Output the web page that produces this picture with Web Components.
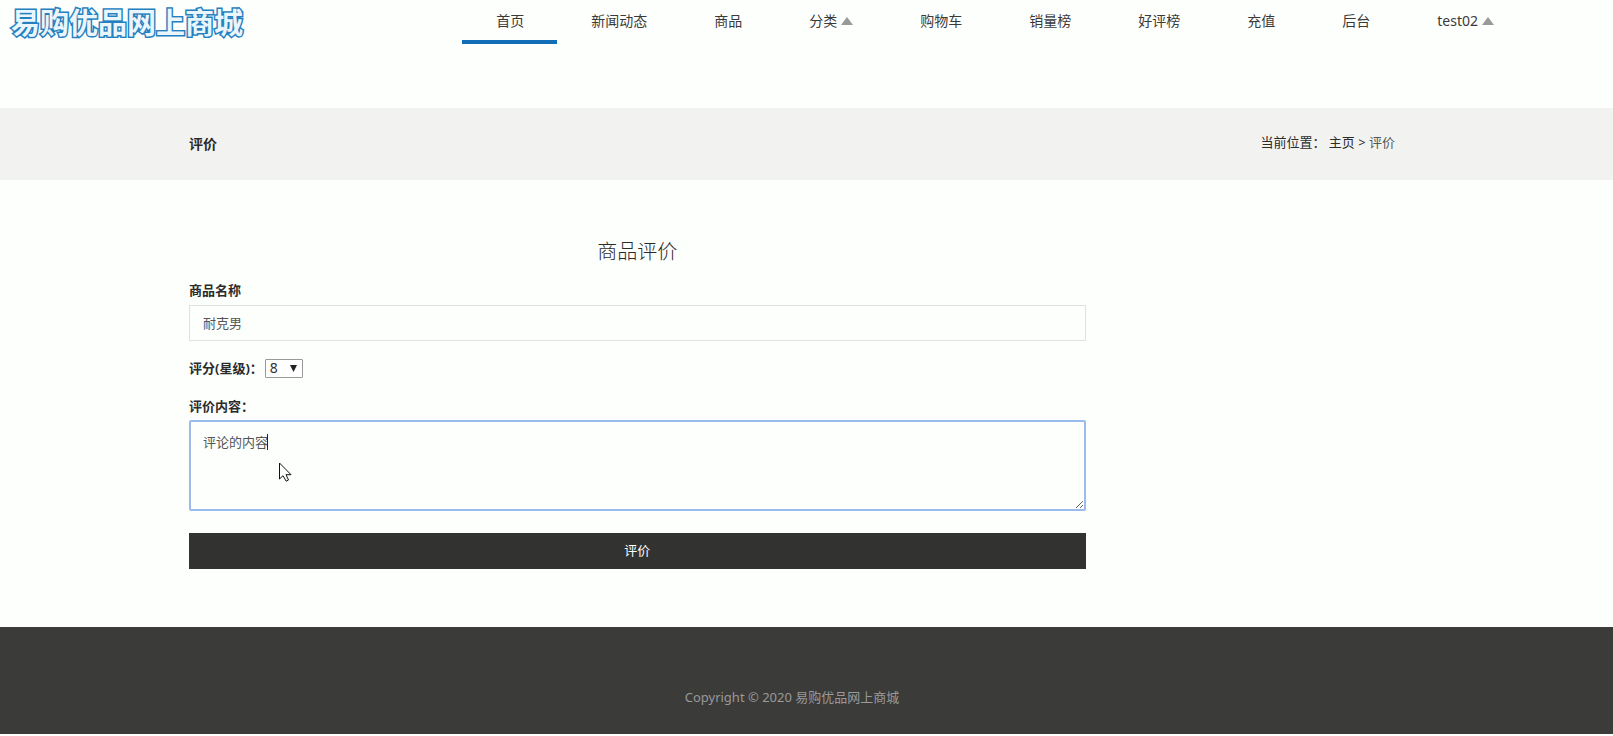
<!DOCTYPE html>
<html lang="zh-CN">
<head>
<meta charset="utf-8">
<meta name="viewport" content="width=device-width, initial-scale=1">
<title>商品评价 - 易购优品网上商城</title>
<style>
  :root { --ink: #2b2b2b; --dark: #323230; --brand: #136fb5; }
  body {
    margin: 0; background: #fdfffd; color: var(--ink);
    font: 13px/20px "Noto Sans", "Noto Sans CJK SC", sans-serif;
  }
</style>
</head>
<body>
<shop-page></shop-page>
<script>
const define = (name, html, setup) => customElements.define(name, class extends HTMLElement {
  constructor() {
    super();
    const t = document.createElement('template');
    t.innerHTML = html;
    this.attachShadow({ mode: 'open' }).append(t.content.cloneNode(true));
  }
  connectedCallback() { if (setup) setup(this, this.shadowRoot); }
});

define('shop-logo', `
<style>
  :host { display: block; }
  a { font-size: 29px; line-height: 46px; font-weight: 700; white-space: nowrap;
      color: #eaf6fd; text-decoration: none; -webkit-text-stroke: 3px #2580bf; paint-order: stroke fill; }
</style>
<a href="#"><slot></slot></a>`);

define('nav-item', `
<style>
  :host { display: block; }
  a { display: flex; align-items: center; box-sizing: border-box; height: 44px; padding: 2px 33px 0 34px;
      border-bottom: 4px solid transparent; font-size: 14px; color: #3a3a3a; text-decoration: none; white-space: nowrap; }
  :host([active]) a { border-color: var(--brand); }
  svg { display: none; margin-left: 4px; }
  :host([menu]) svg { display: block; }
</style>
<a href="#"><slot></slot><svg width="12" height="8" viewBox="0 0 12 8"><path d="M6 0 12 8H0Z" fill="#999"/></svg></a>`);

define('shop-header', `
<style>
  :host { display: block; }
  header { display: flex; justify-content: space-between; height: 108px; padding: 0 86px 0 11px; }
  nav { display: flex; }
</style>
<header><slot name="logo"></slot><nav><slot></slot></nav></header>`);

define('page-container', `
<style>
  :host { display: block; padding: 0 218px 0 189px; }
</style>
<slot></slot>`);

define('title-band', `
<style>
  :host { display: block; background: #f2f3f1; }
  .row { display: flex; justify-content: space-between; height: 72px; }
  h1 { margin: 0; font-size: 14px; line-height: 72px; font-weight: 700; }
  nav { line-height: 68px; white-space: pre; }
  a { color: inherit; text-decoration: none; }
  a:last-child { color: #555; }
</style>
<page-container><div class="row"><h1>评价</h1>
<nav aria-label="当前位置">当前位置： <a href="#">主页</a> &gt; <a href="#">评价</a></nav></div></page-container>`);

define('review-form', `
<style>
  :host { display: block; }
  form { box-sizing: border-box; width: calc(75% - 8px); padding: 56px 0 58px; }
  h2 { margin: 0 0 12px; font-size: 20px; line-height: 32px; font-weight: 300; text-align: center; }
  label { display: block; font-weight: 700; line-height: 20px; }
  input, textarea, button { display: block; box-sizing: border-box; width: 100%; font: inherit; border-radius: 0; }
  input, textarea { border: 1px solid #e0e2e0; background: transparent; color: #555; }
  input { height: 36px; margin: 5px 0 17px; padding: 0 13px 2px; }
  .rating { display: flex; align-items: center; height: 20px; margin-bottom: 18px; }
  .pick { position: relative; margin-left: 2px; }
  select { display: block; appearance: none; width: 38px; height: 19px; padding: 0 4px; border: 1px solid #999; border-radius: 1px;
    background: #fff; color: #333; font: 14px/16px "Noto Sans", sans-serif; }
  .pick svg { position: absolute; right: 6px; top: 6px; pointer-events: none; }
  .field { position: relative; margin: 4px 0 22px; }
  textarea { height: 91px; padding: 10px 12px; border: 2px solid #9bbbec; border-radius: 2px; resize: vertical; }
  .caret { position: absolute; left: 78px; top: 14px; width: 1px; height: 16px; background: #222; }
  .pointer { position: absolute; left: 90px; top: 42px; }
  button { height: 36px; padding: 0 0 2px; border: 0; background: var(--dark); color: #fff; }
</style>
<form>
  <h2>商品评价</h2>
  <label for="name">商品名称</label>
  <input id="name" value="耐克男">
  <div class="rating">
    <label for="stars">评分(星级)：</label>
    <div class="pick"><select id="stars"><option>8</option><option>9</option><option>10</option></select>
      <svg width="7" height="7" viewBox="0 0 7 7"><path d="M0 0H7L3.5 7Z" fill="#222"/></svg></div>
  </div>
  <label for="content">评价内容：</label>
  <div class="field">
    <textarea id="content">评论的内容</textarea>
    <span class="caret"></span>
    <svg class="pointer" width="13" height="20" viewBox="0 0 13 20"><path d="M.5 1V17L4 13.7 7.2 19.2 9.5 18 7 12.7H12Z" fill="#fff" stroke="#111"/></svg>
  </div>
  <button type="button">评价</button>
</form>`);

define('shop-footer', `
<style>
  :host { display: block; }
  footer { box-sizing: border-box; height: 107px; padding: 60px 29px 0 0; background: #3b3b39; color: #999; text-align: center; }
</style>
<footer><slot></slot></footer>`);

define('shop-page', `
<style>:host { display: block; }</style>
<shop-header>
  <shop-logo slot="logo">易购优品网上商城</shop-logo>
  <nav-item active>首页</nav-item><nav-item>新闻动态</nav-item><nav-item>商品</nav-item><nav-item menu>分类</nav-item>
  <nav-item>购物车</nav-item><nav-item>销量榜</nav-item><nav-item>好评榜</nav-item><nav-item>充值</nav-item>
  <nav-item>后台</nav-item><nav-item menu>test02</nav-item>
</shop-header>
<main><title-band></title-band><page-container><review-form></review-form></page-container></main>
<shop-footer>Copyright © 2020 易购优品网上商城</shop-footer>`);
</script>
</body>
</html>
